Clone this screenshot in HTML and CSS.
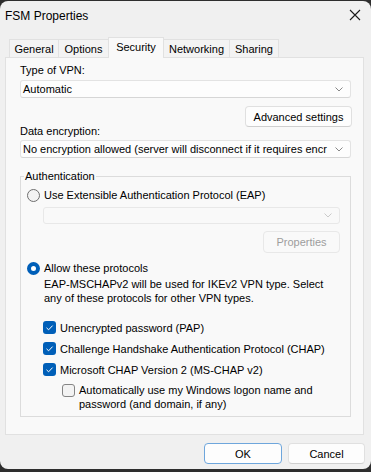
FILE: index.html
```html
<!doctype html>
<html lang="en">
  <head>
    <meta charset="UTF-8" />
    <meta name="viewport" content="width=device-width, initial-scale=1.0" />
    <title>FSM Properties</title>
    <link rel="stylesheet" href="styles.css">
  </head>
  <body>
    <div class="window">
      <div class="titlebar">
        <span class="title">FSM Properties</span>
        <svg class="close" width="12" height="12" viewBox="0 0 12 12">
          <path d="M1 1 L11 11 M11 1 L1 11" stroke="#1a1a1a" stroke-width="1.1" fill="none" />
        </svg>
      </div>

      <div class="tabs">
        <div class="tab">General</div>
        <div class="tab">Options</div>
        <div class="tab active">Security</div>
        <div class="tab">Networking</div>
        <div class="tab">Sharing</div>
      </div>

      <div class="panel">
        <div class="label">Type of VPN:</div>
        <div class="select">
          <span class="select-text">Automatic</span>
          <svg class="chevron" width="8" height="5" viewBox="0 0 8 5">
            <path d="M0.5 0.5 L4 4 L7.5 0.5" />
          </svg>
        </div>

        <div class="btn-row">
          <button class="btn btn-wide">Advanced settings</button>
        </div>

        <div class="label label-tight">Data encryption:</div>
        <div class="select">
          <span class="select-text">No encryption allowed (server will disconnect if it requires encr</span>
          <svg class="chevron" width="8" height="5" viewBox="0 0 8 5">
            <path d="M0.5 0.5 L4 4 L7.5 0.5" />
          </svg>
        </div>

        <fieldset class="group">
          <legend>Authentication</legend>

          <div class="option">
            <span class="radio"></span>
            <span>Use Extensible Authentication Protocol (EAP)</span>
          </div>
          <div class="select select-disabled">
            <span class="select-text"></span>
            <svg class="chevron" width="8" height="5" viewBox="0 0 8 5">
              <path d="M0.5 0.5 L4 4 L7.5 0.5" />
            </svg>
          </div>
          <div class="btn-row">
            <button class="btn btn-props" disabled>Properties</button>
          </div>

          <div class="option option-gap">
            <span class="radio checked"></span>
            <span>Allow these protocols</span>
          </div>
          <p class="note">
            EAP-MSCHAPv2 will be used for IKEv2 VPN type. Select<br />
            any of these protocols for other VPN types.
          </p>

          <div class="checks">
            <div class="check-row">
              <span class="checkbox checked">
                <svg width="13" height="13" viewBox="0 0 13 13"><path d="M3.5 6.8 L5.6 8.8 L9.6 4.6" /></svg>
              </span>
              <span>Unencrypted password (PAP)</span>
            </div>
            <div class="check-row">
              <span class="checkbox checked">
                <svg width="13" height="13" viewBox="0 0 13 13"><path d="M3.5 6.8 L5.6 8.8 L9.6 4.6" /></svg>
              </span>
              <span>Challenge Handshake Authentication Protocol (CHAP)</span>
            </div>
            <div class="check-row">
              <span class="checkbox checked">
                <svg width="13" height="13" viewBox="0 0 13 13"><path d="M3.5 6.8 L5.6 8.8 L9.6 4.6" /></svg>
              </span>
              <span>Microsoft CHAP Version 2 (MS-CHAP v2)</span>
            </div>
          </div>

          <div class="sub-check">
            <span class="checkbox"></span>
            <span>Automatically use my Windows logon name and<br />password (and domain, if any)</span>
          </div>
        </fieldset>
      </div>

      <div class="footer">
        <button class="btn btn-footer btn-default">OK</button>
        <button class="btn btn-footer">Cancel</button>
      </div>
    </div>
  </body>
</html>
```

FILE: styles.css
```css
:root {
  --window-bg: #f0f0f0;
  --panel-bg: #f9f9f9;
  --line: #e1e1e1;
  --accent: #005fb8;
  --text: #000;
}

* {
  margin: 0;
  padding: 0;
  box-sizing: border-box;
}

html {
  background: #2e2e2e;
}

body {
  font-family: 'Liberation Sans', Arial, sans-serif;
  font-size: 11px;
  line-height: 14px;
  color: var(--text);
}

.window {
  margin-top: 1px;
  height: 468px;
  background: var(--window-bg);
  border-radius: 8px;
  display: flex;
  flex-direction: column;
  overflow: hidden;
}

/* title bar */
.titlebar {
  height: 30px;
  display: flex;
  align-items: center;
  justify-content: space-between;
  padding: 0 10px 0 5px;
}

.title {
  font-size: 12px;
}

.close {
  margin-top: -2px;
}

/* tabs */
.tabs {
  margin-top: 6px;
  height: 20px;
  display: flex;
  align-items: flex-end;
  padding-left: 9px;
}

.tab {
  height: 18px;
  padding: 0 5px;
  border: 1px solid var(--line);
  border-bottom: none;
  margin-right: -1px;
  background: #f3f3f3;
  display: flex;
  align-items: center;
  justify-content: center;
}

.tab:nth-child(1) { width: 50px; }
.tab:nth-child(2) { width: 51px; }
.tab:nth-child(4) { width: 67px; }
.tab:nth-child(5) { width: 50px; }

.tab.active {
  width: 56px;
  height: 21px;
  margin-bottom: -1px;
  background: var(--panel-bg);
  padding-bottom: 3px;
  position: relative;
  z-index: 1;
}

/* panel */
.panel {
  margin: 0 7px 0 5px;
  border: 1px solid var(--line);
  background: var(--panel-bg);
  padding: 5px 12px 0 14px;
}

.label-tight {
  margin-top: -3px;
}

.select {
  margin-top: 3px;
  height: 18px;
  background: #fdfdfd;
  border: 1px solid #e3e3e3;
  border-bottom-color: #d6d6d6;
  border-radius: 3px;
  display: flex;
  align-items: center;
  padding: 0 7px 0 2px;
  gap: 8px;
}

.label-tight + .select {
  margin-top: 2px;
}

.select-text {
  flex: 1;
  white-space: nowrap;
}

.chevron path {
  fill: none;
  stroke: #7a7a7a;
  stroke-width: 0.9;
}

.select-disabled {
  margin: 4px 0 0 16px;
  height: 17px;
  background: var(--panel-bg);
  border-color: #e8e8e8;
}

.select-disabled .chevron path {
  stroke: #c4c4c4;
}

.btn-row {
  display: flex;
  justify-content: flex-end;
  margin-top: 8px;
}

.btn {
  font-family: inherit;
  font-size: 11px;
  color: var(--text);
  height: 21px;
  background: #fdfdfd;
  border: 1px solid #e0e0e0;
  border-bottom-color: #cfcfcf;
  border-radius: 4px;
}

.btn-wide {
  width: 107px;
  margin-right: -1px;
}

.btn-props {
  width: 77px;
  height: 22px;
  color: #9d9d9d;
  background: var(--panel-bg);
  border-color: #e8e8e8;
}

.group .btn-row {
  margin-top: 7px;
}

/* authentication group */
.group {
  margin: 11px 0 17px;
  border: 1px solid #dcdcdc;
  padding: 4px 10px 5px 6px;
}

.group legend {
  margin-left: -3px;
  padding: 0 1px;
}

.option {
  height: 16px;
  display: flex;
  align-items: center;
  gap: 4px;
}

.option-gap {
  margin-top: 7px;
}

.radio {
  width: 13px;
  height: 13px;
  border-radius: 50%;
  border: 1px solid #6e6e6e;
  background: #f3f3f3;
}

.radio.checked {
  border: 4px solid var(--accent);
  background: #fff;
}

.note {
  margin: 1px 0 0 17px;
}

.checks {
  margin: 12px 0 0 16px;
}

.check-row {
  height: 21px;
  display: flex;
  align-items: center;
  gap: 4px;
}

.checkbox {
  width: 13px;
  height: 13px;
  flex: none;
  border: 1px solid #858585;
  border-radius: 3px;
  background: #f3f3f3;
  display: flex;
}

.checkbox.checked {
  border: none;
  background: var(--accent);
}

.checkbox svg path {
  fill: none;
  stroke: #fff;
  stroke-width: 1;
}

.sub-check {
  margin: 3px 0 0 35px;
  display: flex;
  align-items: flex-start;
  gap: 4px;
}

.sub-check .checkbox {
  margin-top: 1px;
}

/* footer */
.footer {
  margin-top: 8px;
  display: flex;
  justify-content: flex-end;
  gap: 6px;
  padding-right: 6px;
}

.btn-footer {
  width: 77px;
}

.btn-default {
  width: 78px;
  border-color: #6ea6dc;
}
```
